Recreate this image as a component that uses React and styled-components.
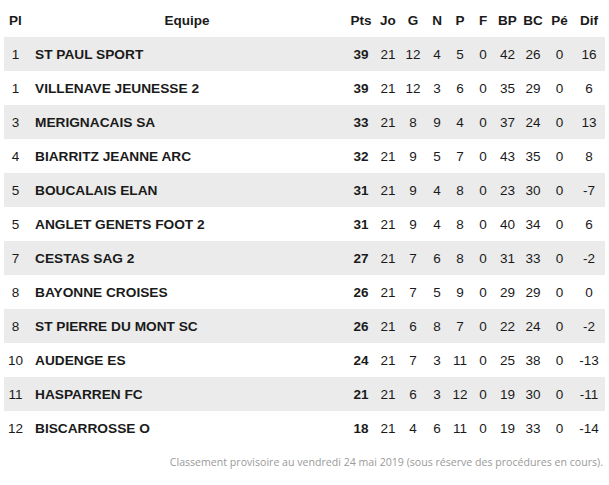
import React from "react";
import styled, { createGlobalStyle } from "styled-components";

const Global = createGlobalStyle`
  html, body { margin: 0; padding: 0; background: #fff; }
  body { font-family: "Liberation Sans", Arial, sans-serif; color: #1a1a1a; }
`;

const Page = styled.div`
  padding: 4px 4px 0 4px;
  width: 601px;
`;

const Table = styled.table`
  width: 601px;
  border-collapse: collapse;
  table-layout: fixed;
  font-size: 13.5px;
`;

const HeadCell = styled.th`
  height: 33px;
  padding: 0;
  font-weight: bold;
  text-align: center;
  vertical-align: middle;
`;

const Row = styled.tr`
  height: 34px;
  background: ${(p) => (p.$shade ? "#ebebeb" : "#fff")};
`;

const Cell = styled.td`
  padding: 0;
  text-align: center;
  vertical-align: middle;
  font-weight: ${(p) => (p.$bold ? "bold" : "normal")};
`;

const TeamCell = styled.td`
  padding: 0 0 0 8px;
  text-align: left;
  vertical-align: middle;
  font-weight: bold;
  font-size: 13.7px;
  white-space: nowrap;
`;

const Footer = styled.p`
  margin: 10px 2px 0 0;
  text-align: right;
  font-family: "Open Sans", "Liberation Sans", sans-serif;
  font-size: 10.6px;
  color: #9a9a9a;
`;

const widths = [23, 320, 28, 26, 24, 24, 22, 24, 25, 26, 27, 32];

const heads = ["Pl", "Equipe", "Pts", "Jo", "G", "N", "P", "F", "BP", "BC", "Pé", "Dif"];

const rows = [
  [1, "ST PAUL SPORT", 39, 21, 12, 4, 5, 0, 42, 26, 0, 16],
  [1, "VILLENAVE JEUNESSE 2", 39, 21, 12, 3, 6, 0, 35, 29, 0, 6],
  [3, "MERIGNACAIS SA", 33, 21, 8, 9, 4, 0, 37, 24, 0, 13],
  [4, "BIARRITZ JEANNE ARC", 32, 21, 9, 5, 7, 0, 43, 35, 0, 8],
  [5, "BOUCALAIS ELAN", 31, 21, 9, 4, 8, 0, 23, 30, 0, -7],
  [5, "ANGLET GENETS FOOT 2", 31, 21, 9, 4, 8, 0, 40, 34, 0, 6],
  [7, "CESTAS SAG 2", 27, 21, 7, 6, 8, 0, 31, 33, 0, -2],
  [8, "BAYONNE CROISES", 26, 21, 7, 5, 9, 0, 29, 29, 0, 0],
  [8, "ST PIERRE DU MONT SC", 26, 21, 6, 8, 7, 0, 22, 24, 0, -2],
  [10, "AUDENGE ES", 24, 21, 7, 3, 11, 0, 25, 38, 0, -13],
  [11, "HASPARREN FC", 21, 21, 6, 3, 12, 0, 19, 30, 0, -11],
  [12, "BISCARROSSE O", 18, 21, 4, 6, 11, 0, 19, 33, 0, -14],
];

export default function App() {
  return (
    <Page>
      <Global />
      <Table>
        <colgroup>
          {widths.map((w, i) => (
            <col key={i} style={{ width: w }} />
          ))}
        </colgroup>
        <thead>
          <tr>
            {heads.map((h) => (
              <HeadCell key={h}>{h}</HeadCell>
            ))}
          </tr>
        </thead>
        <tbody>
          {rows.map((r, i) => (
            <Row key={i} $shade={i % 2 === 0}>
              <Cell>{r[0]}</Cell>
              <TeamCell>{r[1]}</TeamCell>
              {r.slice(2).map((v, j) => (
                <Cell key={j} $bold={j === 0}>
                  {v}
                </Cell>
              ))}
            </Row>
          ))}
        </tbody>
      </Table>
      <Footer>
        Classement provisoire au vendredi 24 mai 2019 (sous réserve des procédures en cours).
      </Footer>
    </Page>
  );
}
